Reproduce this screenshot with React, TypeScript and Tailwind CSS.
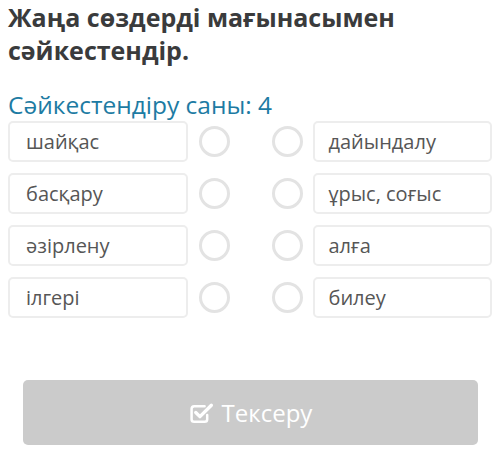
const left = ["шайқас", "басқару", "әзірлену", "ілгері"];
const right = ["дайындалу", "ұрыс, соғыс", "алға", "билеу"];

function Circle() {
  return <div className="h-[31px] w-[31px] shrink-0 rounded-full border-[3px] border-[#e3e3e3] bg-white" />;
}

// check-square-o style glyph
function CheckSquare() {
  return (
    <svg width="26" height="22" viewBox="0 0 25 20" fill="none" className="shrink-0">
      <path
        d="M15 3.5H5a2.5 2.5 0 0 0-2.5 2.5v10A2.5 2.5 0 0 0 5 18.5h10a2.5 2.5 0 0 0 2.5-2.5v-4"
        stroke="white"
        strokeWidth="2.4"
        strokeLinecap="round"
      />
      <path d="M6.5 9.5l4 4L21.5 2.5" stroke="white" strokeWidth="3.2" strokeLinecap="round" strokeLinejoin="round" />
    </svg>
  );
}

export default function App() {
  return (
    <div className="h-[456px] w-[500px] bg-white font-['Open_Sans',sans-serif]">
      <div className="px-[8px] pt-[1px]">
        <h1 className="text-[25px] font-bold leading-[33px] text-[#3a3b3c]">
          Жаңа сөздерді мағынасымен сәйкестендір.
        </h1>
        <p className="mt-[23px] text-[24.5px] leading-[30px] text-[#1d7ba3]">
          Сәйкестендіру саны: 4
        </p>
        <div className="mt-[1px] flex flex-col gap-[11px]">
          {left.map((l, i) => (
            <div key={l} className="flex items-center">
              <div className="flex h-[41px] w-[180px] items-center rounded-[5px] border-2 border-[#ededed] pl-[16px] text-[20px] text-[#565656]">
                {l}
              </div>
              <div className="ml-[11px]">
                <Circle />
              </div>
              <div className="ml-[42px]">
                <Circle />
              </div>
              <div className="ml-[10px] flex h-[41px] w-[180px] items-center rounded-[5px] border-2 border-[#ededed] pl-[14px] text-[20px] text-[#565656]">
                {right[i]}
              </div>
            </div>
          ))}
        </div>
      </div>
      <div className="mt-[62px] px-[23px]">
        <button className="flex h-[65px] w-[455px] items-center justify-center gap-[7px] rounded-[5px] bg-[#cbcbcb] text-[24px] text-white">
          <CheckSquare />
          Тексеру
        </button>
      </div>
    </div>
  );
}
